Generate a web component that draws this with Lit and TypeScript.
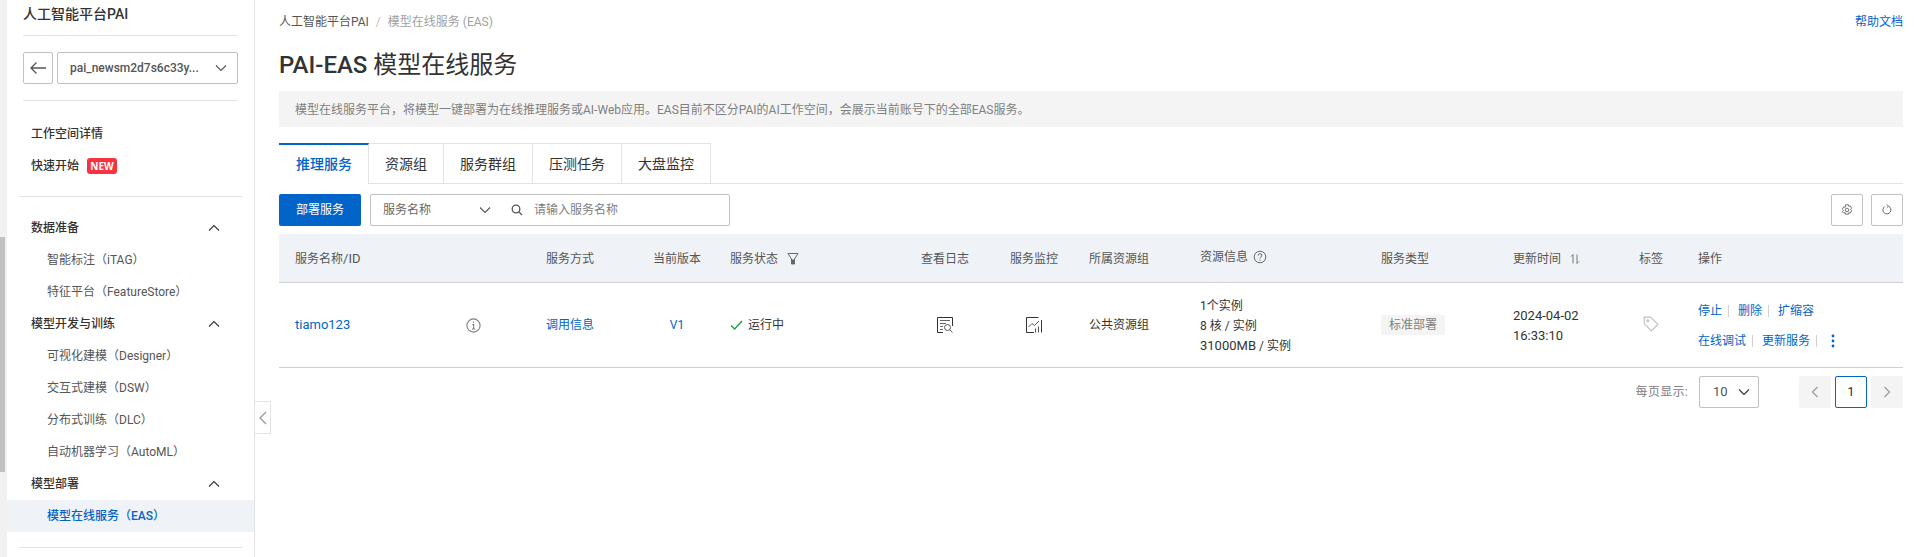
import { LitElement, html, css } from "lit";
import { customElement } from "lit/decorators.js";

const chevDown = (cls = "chev") => html`<svg class=${cls} width="12" height="12" viewBox="0 0 12 12" fill="none" stroke="currentColor" stroke-width="1.1"><path d="M1 3.5 6 8.5 11 3.5"/></svg>`;
const chevUp = html`<svg class="chev up" width="12" height="12" viewBox="0 0 12 12" fill="none" stroke="currentColor" stroke-width="1.1"><path d="M1 8.5 6 3.5 11 8.5"/></svg>`;

@customElement("app-root")
export class AppRoot extends LitElement {
  static styles = css`
    :host { display: block; height: 557px; overflow: hidden; position: relative; background: #fff; color: #333;
      font: 12px/20px Roboto, "Noto Sans CJK SC", sans-serif; }
    * { box-sizing: border-box; }
    a { color: #0064c8; text-decoration: none; }
    svg { display: block; flex: none; }
    .page { display: flex; height: 557px; }
    .track { width: 7px; flex: none; background: #f1f1f1; padding-top: 237px; }
    .thumb { width: 5px; height: 235px; background: #c1c1c1; }

    .side { width: 248px; flex: none; border-right: 1px solid #e3e3e3; overflow: hidden; }
    .side-head { padding: 0 16px; }
    .side-title { height: 35px; padding-top: 4px; font-size: 14px; font-weight: 500; color: #333; }
    .rule { height: 1px; background: #e3e3e3; }
    .switch { display: flex; gap: 4px; padding: 16px 0; }
    .back { width: 30px; height: 32px; border: 1px solid #c1c1c1; border-radius: 2px; display: flex; align-items: center; justify-content: center; color: #555; }
    .wsel { flex: 1; height: 32px; border: 1px solid #c1c1c1; border-radius: 2px; display: flex; align-items: center; justify-content: space-between; padding: 0 10px 0 12px; font-weight: 500; color: #555; }
    .wsel .chev { color: #555; }
    .nav-top { padding: 17px 0 14px; }
    .item { height: 32px; display: flex; align-items: center; padding-left: 24px; font-weight: 500; color: #333; }
    .badge { margin-left: 8px; width: 30px; height: 16px; border-radius: 3px; background: #f5343f; color: #fff; font: 700 10px/16px "Open Sans", sans-serif; text-align: center; }
    .full-rule { height: 1px; background: #e3e3e3; margin: 0 12px; }
    .nav { padding: 15px 0 15px; }
    .sec { justify-content: space-between; padding-right: 34px; }
    .chev.up { color: #333; }
    .sub { font-weight: 400; padding-left: 40px; color: #555; }
    .sub.on { background: #eff3f8; color: #0064c8; font-weight: 500; }

    .handle { position: absolute; left: 255px; top: 401px; width: 16px; height: 33px; border: 1px solid #e3e3e3; border-left: 0; display: flex; align-items: center; justify-content: center; color: #999; background: #fff; }

    .main { flex: 1; min-width: 0; padding: 12px 11px 0 24px; }
    .crumb-row { display: flex; justify-content: space-between; height: 20px; }
    .crumb { color: #a0a0a0; display: flex; }
    .crumb b { font-weight: 400; color: #555; }
    .crumb i { font-style: normal; color: #c1c1c1; margin: 0 7px; }
    h1 { margin: 0; padding-top: 16px; height: 59px; font: 400 24px/34px Roboto, "Noto Sans CJK SC", sans-serif; color: #333; }
    h1 span { font-weight: 500; }
    .notice { height: 36px; background: #f4f4f4; color: #808080; padding: 9px 16px 0; }
    .tabs { display: flex; margin-top: 16px; height: 41px; border-bottom: 1px solid #e3e3e3; }
    .tab { height: 41px; padding: 0 16px; font-size: 14px; line-height: 40px; border: 1px solid #e3e3e3; border-left: 0; border-bottom: 0; }
    .tab.on { color: #0064c8; font-weight: 500; border: 0; border-top: 2px solid #0064c8; border-right: 1px solid #e3e3e3; background: #fff; width: 90px; padding: 0 0 0 17px; line-height: 38px; }
    .bar { display: flex; align-items: flex-start; margin-top: 10px; height: 32px; }
    .primary { width: 82px; height: 32px; background: #0064c8; color: #fff; border-radius: 2px; text-align: center; line-height: 32px; }
    .search { width: 360px; height: 32px; margin-left: 9px; border: 1px solid #c1c1c1; border-radius: 2px; display: flex; align-items: center; padding-left: 12px; color: #808080; }
    .search .kind { width: 96px; color: #666; }
    .search .chev { color: #555; }
    .search .mag { margin: 0 11px 0 20px; color: #555; }
    .spacer { flex: 1; }
    .tool { width: 32px; height: 32px; border: 1px solid #c1c1c1; border-radius: 2px; display: flex; align-items: center; justify-content: center; color: #666; margin-left: 8px; }

    .tr { display: grid; grid-template-columns: 251px 107px 77px 191px 89px 79px 111px 181px 132px 126px 59px 205px; padding-left: 16px; align-items: center; }
    .thead { margin-top: 8px; height: 49px; padding-top: 2px; background: #eff3f8; border-bottom: 1px solid #d1d1d1; color: #555; }
    .tbody { height: 85px; border-bottom: 1px solid #d1d1d1; }
    .with { display: flex; align-items: center; }
    .with.f { gap: 9px; }
    .with.h { margin-top: -4px; }
    .name { width: 171px; font-size: 13px; }
    .info { color: #808080; }
    .ctr { width: 48px; text-align: center; }
    .ok { gap: 5px; color: #333; }
    .ic { margin-left: 16px; color: #333; }
    .tag { display: inline-block; height: 20px; padding: 0 8px; background: #f4f4f4; color: #808080; border-radius: 2px; }
    .tagic { color: #c1c1c1; margin-left: 4px; margin-top: -2px; }
    .low { padding-top: 2px; }
    .n { font-size: 13px; }
    .acts { display: flex; flex-direction: column; gap: 10px; margin-top: 2px; }
    .act { display: flex; align-items: center; height: 20px; }
    .act s { width: 1px; height: 12px; background: #d1d1d1; margin: 0 9px 0 6px; }
    .dots { margin-left: 5px; color: #0064c8; }

    .pager { display: flex; align-items: center; justify-content: flex-end; margin-top: 8px; height: 32px; }
    .plabel { color: #808080; margin-right: 11px; letter-spacing: .3px; }
    .psel { width: 60px; height: 32px; border: 1px solid #c1c1c1; border-radius: 2px; display: flex; align-items: center; justify-content: space-between; padding: 0 8px 0 13px; margin-right: 40px; font-size: 13px; color: #555; }
    .psel .chev { color: #333; }
    .pbtn { width: 32px; height: 32px; display: flex; align-items: center; justify-content: center; background: #f4f4f4; color: #9a9a9a; border-radius: 2px; }
    .pcur { width: 32px; height: 32px; margin: 0 4px; border: 1px solid #0064c8; border-radius: 2px; text-align: center; line-height: 30px; color: #333; font-size: 13px; }
  `;

  render() {
    const subs = (xs: string[]) => xs.map((x) => html`<div class="item sub">${x}</div>`);
    const sec = (t: string) => html`<div class="item sec">${t}${chevUp}</div>`;
    return html`
      <div class="page">
        <div class="track"><div class="thumb"></div></div>
        <aside class="side">
          <div class="side-head">
            <div class="side-title">人工智能平台PAI</div>
            <div class="rule"></div>
            <div class="switch">
              <div class="back">
                <svg width="18" height="14" viewBox="0 0 18 14" fill="none" stroke="currentColor" stroke-width="1.3"><path d="M17 7H2M7.5 1.5 2 7l5.5 5.5"/></svg>
              </div>
              <div class="wsel"><span>pai_newsm2d7s6c33y...</span>${chevDown()}</div>
            </div>
            <div class="rule"></div>
          </div>
          <div class="nav-top">
            <div class="item">工作空间详情</div>
            <div class="item">快速开始<span class="badge">NEW</span></div>
          </div>
          <div class="full-rule"></div>
          <div class="nav">
            ${sec("数据准备")}
            ${subs(["智能标注（iTAG）", "特征平台（FeatureStore）"])}
            ${sec("模型开发与训练")}
            ${subs(["可视化建模（Designer）", "交互式建模（DSW）", "分布式训练（DLC）", "自动机器学习（AutoML）"])}
            ${sec("模型部署")}
            <div class="item sub on">模型在线服务（EAS）</div>
          </div>
          <div class="full-rule"></div>
        </aside>
        <main class="main">
          <div class="crumb-row">
            <div class="crumb"><b>人工智能平台PAI</b><i>/</i><span>模型在线服务 (EAS)</span></div>
            <a href="#">帮助文档</a>
          </div>
          <h1><span>PAI-EAS</span> 模型在线服务</h1>
          <div class="notice">模型在线服务平台，将模型一键部署为在线推理服务或AI-Web应用。EAS目前不区分PAI的AI工作空间，会展示当前账号下的全部EAS服务。</div>
          <div class="tabs">
            <div class="tab on">推理服务</div>
            <div class="tab">资源组</div>
            <div class="tab">服务群组</div>
            <div class="tab">压测任务</div>
            <div class="tab">大盘监控</div>
          </div>
          <div class="bar">
            <div class="primary">部署服务</div>
            <div class="search">
              <span class="kind">服务名称</span>${chevDown()}
              <svg class="mag" width="12" height="12" viewBox="0 0 12 12" fill="none" stroke="currentColor" stroke-width="1.3"><circle cx="5" cy="5" r="3.8"/><path d="M8 8l3 3"/></svg>
              <span>请输入服务名称</span>
            </div>
            <div class="spacer"></div>
            <div class="tool">
              <svg width="12" height="12" viewBox="0 0 12 12" fill="none" stroke="currentColor" stroke-width="0.9"><path d="M4.6 .8h2.8l.4 1.5 1.5-.4 1.4 2.4-1.1 1.2 1.1 1.2-1.4 2.4-1.5-.4-.4 1.5H4.6l-.4-1.5-1.5.4L1.3 7.7l1.1-1.2-1.1-1.2 1.4-2.4 1.5.4z"/><circle cx="6" cy="6" r="1.8"/></svg>
            </div>
            <div class="tool">
              <svg width="12" height="12" viewBox="0 0 12 12" fill="none" stroke="currentColor" stroke-width="1"><path d="M7.5 2.2A4 4 0 1 1 3.6 2.6"/><path d="M5.6 .6 7.6 2.2 5.8 3.8" stroke-width=".9"/></svg>
            </div>
          </div>
          <div class="tr thead">
            <div>服务名称<span class="n">/ID</span></div>
            <div>服务方式</div>
            <div>当前版本</div>
            <div class="with f">服务状态
              <svg width="12" height="14" viewBox="0 0 12 14" fill="none" stroke="#666" stroke-width="1"><path d="M1 1.5h10L7.5 7v5h-3V7z"/><path d="M5 8h2v3.5H5z" fill="#666"/></svg>
            </div>
            <div>查看日志</div>
            <div>服务监控</div>
            <div>所属资源组</div>
            <div class="with h">资源信息
              <svg style="margin-left:5px" width="14" height="14" viewBox="0 0 14 14" fill="none" stroke="#666" stroke-width="1"><circle cx="7" cy="7" r="5.8"/><path d="M5.2 5.6A1.8 1.8 0 1 1 7.6 7.2c-.5.2-.6.5-.6 1.1"/><path d="M7 9.6v1.1"/></svg>
            </div>
            <div>服务类型</div>
            <div class="with" style="gap:9px">更新时间
              <svg width="10" height="12" viewBox="0 0 10 12" fill="none" stroke="#777" stroke-width="1"><path d="M3 10.5V1.5L1 3.5"/><path d="M7 1.5v9l2-2"/></svg>
            </div>
            <div>标签</div>
            <div>操作</div>
          </div>
          <div class="tr tbody">
            <div class="with">
              <a class="name" href="#">tiamo123</a>
              <svg class="info" width="15" height="15" viewBox="0 0 15 15" fill="none" stroke="currentColor" stroke-width="1.1"><circle cx="7.5" cy="7.5" r="6.6"/><path d="M6.3 6.6h1.4v4.4M6 11h3.2M7.5 3.6v1.4"/></svg>
            </div>
            <div><a href="#">调用信息</a></div>
            <div class="ctr"><a href="#">V1</a></div>
            <div class="with ok">
              <svg width="13" height="12" viewBox="0 0 13 12" fill="none" stroke="#1e9e46" stroke-width="1.4"><path d="M1 6.5 4.6 10 12 2"/></svg>
              运行中
            </div>
            <div>
              <svg class="ic" width="16" height="16" viewBox="0 0 16 16" fill="none" stroke="currentColor" stroke-width="1"><path d="M6 15.5H.5V.5h15V9"/><path d="M3 3.5h10M3 6.5h6M3 9.5h3M3 12.5h3" stroke="#666"/><circle cx="10.5" cy="10.5" r="3" stroke="#555"/><path d="M12.7 12.7 15.5 15.5" stroke="#555"/></svg>
            </div>
            <div>
              <svg class="ic" width="16" height="16" viewBox="0 0 16 16" fill="none" stroke="currentColor" stroke-width="1"><path d="M8 15.5H.5V.5h12M15.5 3v12.5"/><path d="M2.5 10 6 6.5l2.5 2L13 4" stroke="#555"/><path d="M9.5 15.5v-4M12.5 15.5v-6" stroke="#555"/></svg>
            </div>
            <div>公共资源组</div>
            <div class="low">1个实例<br />8 核 / 实例<br /><span class="n">31000MB</span> / 实例</div>
            <div><span class="tag">标准部署</span></div>
            <div class="low n">2024-04-02<br />16:33:10</div>
            <div>
              <svg class="tagic" width="16" height="16" viewBox="0 0 16 16" fill="none" stroke="currentColor" stroke-width="1.2"><path d="M1.2 1.2h6.4l7.2 7.2-6.4 6.4-7.2-7.2z"/><circle cx="4.8" cy="4.8" r=".9"/></svg>
            </div>
            <div class="acts">
              <div class="act"><a href="#">停止</a><s></s><a href="#">删除</a><s></s><a href="#">扩缩容</a></div>
              <div class="act"><a href="#">在线调试</a><s></s><a href="#">更新服务</a><s></s>
                <svg class="dots" width="4" height="14" viewBox="0 0 4 14" fill="currentColor"><circle cx="2" cy="2" r="1.4"/><circle cx="2" cy="7" r="1.4"/><circle cx="2" cy="12" r="1.4"/></svg>
              </div>
            </div>
          </div>
          <div class="pager">
            <span class="plabel">每页显示:</span>
            <div class="psel"><span>10</span>${chevDown()}</div>
            <div class="pbtn"><svg width="12" height="12" viewBox="0 0 12 12" fill="none" stroke="currentColor" stroke-width="1.2"><path d="M8.5 1 3.5 6l5 5"/></svg></div>
            <div class="pcur">1</div>
            <div class="pbtn"><svg width="12" height="12" viewBox="0 0 12 12" fill="none" stroke="currentColor" stroke-width="1.2"><path d="M3.5 1l5 5-5 5"/></svg></div>
          </div>
        </main>
      </div>
      <div class="handle"><svg width="10" height="14" viewBox="0 0 10 14" fill="none" stroke="currentColor" stroke-width="1.3"><path d="M8 1 2 7l6 6"/></svg></div>
    `;
  }
}
